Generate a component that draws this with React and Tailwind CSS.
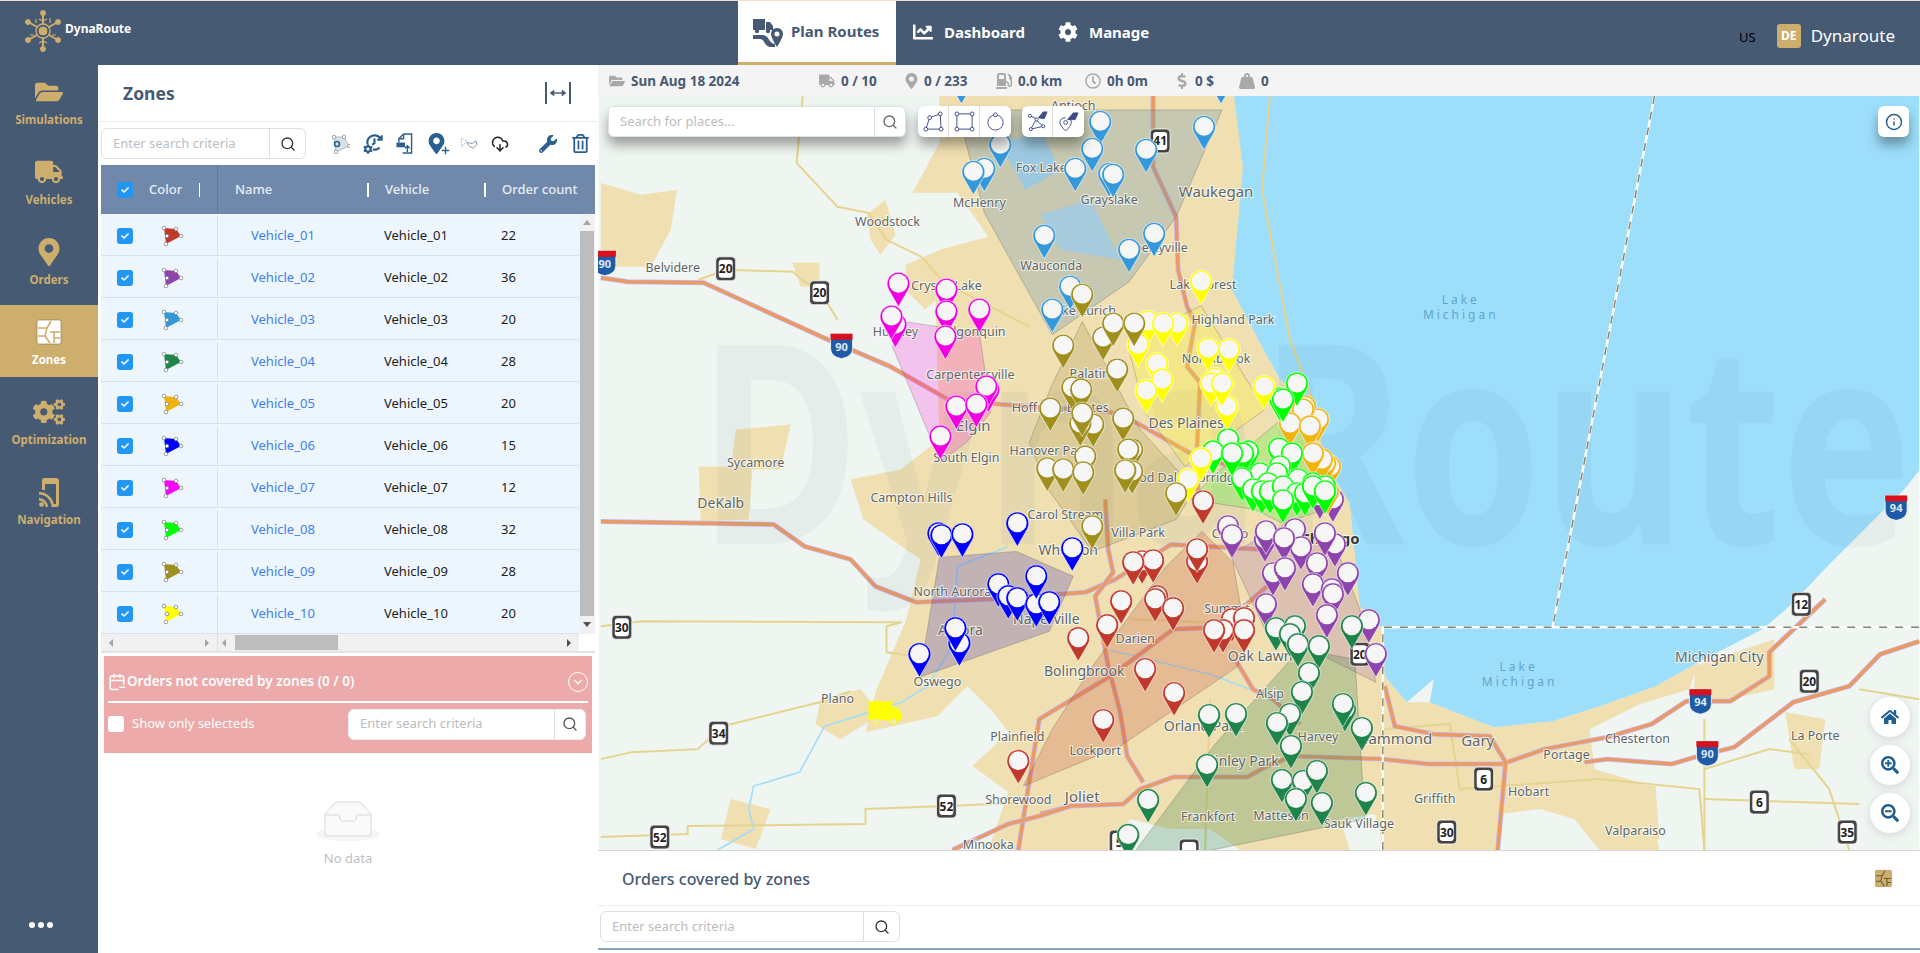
import React from "react";
import {
  FaFolderOpen, FaTruck, FaMapMarkerAlt, FaCogs, FaCog, FaChartLine, FaGasPump, FaRegClock,
  FaDollarSign, FaWeightHanging, FaWrench, FaRegTrashAlt, FaHome, FaSearchPlus, FaSearchMinus, FaHistory, FaCheck,
} from "react-icons/fa";
import { Search, CloudDownload, Info, ChevronDown, Plus, CalendarMinus } from "lucide-react";

const rows = [
  ["Vehicle_01", 22, "#c0392b"], ["Vehicle_02", 36, "#8e44ad"], ["Vehicle_03", 20, "#3498db"],
  ["Vehicle_04", 28, "#1e8449"], ["Vehicle_05", 20, "#f1b40f"], ["Vehicle_06", 15, "#0000ff"],
  ["Vehicle_07", 12, "#ff00ff"], ["Vehicle_08", 32, "#00ff00"], ["Vehicle_09", 28, "#a08f1c"],
  ["Vehicle_10", 20, "#ffff00"],
];

// pin tips in page pixels, painted in this order
const pinGroups = [
  ["#3498db", [[961,104],[1221,104],[1000,168],[984,192],[973,195],[1100,145],[1092,172],[1075,192],[1146,173],[1204,150],[1109,197],[1113,198],[1044,259],[1154,257],[1129,273],[1070,310],[1052,333]]],
  ["#f000e0", [[898,307],[946,313],[979,333],[895,348],[891,340],[946,335],[945,360],[988,413],[986,410],[956,430],[976,428],[940,460]]],
  ["#0000ff", [[938,557],[941,559],[962,558],[1017,547],[1072,572],[998,608],[1008,620],[1017,622],[1036,628],[1036,600],[1049,626],[959,667],[955,652],[919,678]]],
  ["#8e44ad", [[1333,523],[1320,520],[1228,550],[1232,559],[1265,563],[1266,555],[1295,553],[1335,568],[1325,557],[1301,571],[1284,562],[1273,597],[1285,592],[1317,587],[1348,597],[1313,608],[1332,613],[1333,618],[1327,639],[1266,628],[1369,644],[1376,678]]],
  ["#c0392b", [[1203,525],[1142,585],[1153,584],[1133,586],[1197,585],[1197,573],[1121,625],[1157,620],[1155,623],[1173,632],[1107,649],[1078,662],[1145,693],[1174,717],[1232,643],[1244,642],[1223,654],[1214,654],[1244,654],[1103,744],[1018,785]]],
  ["#f1b40f", [[1330,490],[1325,487],[1322,483],[1318,443],[1305,430],[1303,433],[1290,447],[1310,450],[1313,477],[1328,515]]],
  ["#00ff00", [[1297,407],[1280,422],[1283,423],[1228,463],[1213,475],[1248,475],[1243,477],[1279,472],[1292,477],[1280,490],[1260,497],[1277,497],[1242,502],[1268,507],[1253,513],[1262,515],[1270,515],[1298,503],[1313,507],[1325,510],[1283,510],[1297,517],[1305,517],[1313,510],[1325,515],[1283,524],[1232,477]]],
  ["#ffff00", [[1201,305],[1148,345],[1177,347],[1163,347],[1138,368],[1157,387],[1162,403],[1146,414],[1208,372],[1229,373],[1215,402],[1211,407],[1227,430],[1222,407],[1264,410],[1188,503],[1201,482]]],
  ["#a08f1c", [[1082,318],[1063,369],[1103,361],[1113,347],[1134,347],[1117,393],[1072,411],[1081,413],[1050,432],[1093,448],[1080,447],[1082,437],[1123,442],[1132,473],[1128,473],[1085,480],[1047,492],[1063,493],[1083,496],[1132,495],[1125,494],[1176,517],[1092,550]]],
  ["#1e8449", [[1276,652],[1295,650],[1290,658],[1298,668],[1319,670],[1309,697],[1352,650],[1302,716],[1345,733],[1343,728],[1209,739],[1236,738],[1290,738],[1277,747],[1291,770],[1362,752],[1207,789],[1282,804],[1303,805],[1317,795],[1296,823],[1322,827],[1366,817],[1148,824],[1128,859]]],
];

const zones = [
  ["#5f8db5", "966,110 1222,110 1176,217 1129,282 1052,335 984,213 964,137", 0.28],
  ["#ff00e0", "904,322 979,333 984,367 990,413 966,443 940,462 892,347", 0.2],
  ["#8a7a20", "1082,322 1140,430 1195,490 1176,520 1092,552 1046,487 1029,443 1051,387", 0.18],
  ["#ffff00", "1201,306 1265,410 1185,467 1145,413 1127,343", 0.22],
  ["#00ff00", "1297,407 1325,510 1283,524 1255,510 1190,500 1215,475", 0.2],
  ["#4a3cc0", "939,558 1016,552 1073,577 1049,632 919,678", 0.28],
  ["#c0392b", "1202,532 1233,563 1245,633 1238,667 1120,747 1023,787 1052,730 1090,670 1166,567", 0.22],
  ["#8e44ad", "1230,555 1285,525 1335,545 1360,610 1376,683 1320,655 1265,630", 0.2],
  ["#2f7f4a", "1300,650 1355,660 1365,820 1207,852 1135,852 1215,745", 0.25],
];

const highways = [
  "600,278 627,282 703,283 823,338 890,367 948,400 1002,405 1109,412 1136,423 1189,453 1240,470",
  "600,522 773,525 804,547 850,560 875,587 916,603 988,600 1085,593 1115,580 1171,545 1263,550",
  "1153,96 1153,167 1176,217 1178,270 1187,307 1195,323 1187,367 1200,383 1197,447 1198,500",
  "1105,500 1108,550 1113,573 1095,597 1108,667 1120,713 1127,757 1143,783",
  "1040,815 1070,807 1123,805 1140,790 1173,778 1247,778 1267,767 1293,757 1383,760 1430,765 1502,765 1545,750 1608,738 1652,725 1687,702 1731,702 1770,677 1770,653 1826,600",
  "1585,763 1608,760 1672,765 1699,757 1735,748 1794,703 1850,687 1881,655 1920,642",
  "1385,687 1395,727 1434,735 1490,737 1506,763 1498,851",
  "1018,851 1039,720 1110,677 1173,630 1220,628 1267,587",
  "952,851 1008,825 1039,817 1070,807",
  "1237,663 1253,690 1273,700 1300,725",
];

const minorRoads = [
  "698,280 725,270 792,272 823,297 837,320",
  "802,96 796,163 837,207 868,213 886,240 921,257 944,283 1029,327",
  "600,627 641,622 901,623 886,627 886,653 916,657",
  "600,760 631,753 697,750 722,727 819,703 850,692",
  "600,838 687,835 687,827 865,825 865,810 947,807 1040,803",
  "1210,700 1205,851",
  "1130,620 1250,625",
  "1380,730 1450,725 1460,790 1600,780 1700,790 1705,851",
  "1705,851 1705,720",
  "1705,800 1860,805",
  "1790,740 1830,790 1850,851",
  "1705,770 1770,750 1810,755",
  "1860,690 1920,700",
  "1270,96 1262,190 1290,340 1320,420",
];

const labels = [
  ["Antioch",1073,106],["Fox Lake",1041,168],["McHenry",979,203],["Grayslake",1109,200],["Waukegan",1216,193,15],["Woodstock",887,222],["Wauconda",1051,266],
  ["Libertyville",1156,248],["Lake Forest",1203,285],["Highland Park",1233,320],["Crystal Lake",946,286],["Lake Zurich",1082,311],["Belvidere",672,268],["Huntley",895,332],
  ["Algonquin",975,332],["Carpentersville",970,375],["Palatine",1093,374],["Northbrook",1216,359],["Hoffman Estates",1060,408],["Elgin",973,427,15],["Des Plaines",1186,424,14],
  ["Hanover Park",1049,451],["South Elgin",966,458],["Sycamore",755,463],["Wood Dale",1152,479],["Norridge",1215,479],["Campton Hills",911,499],["DeKalb",720,505,14],
  ["Carol Stream",1065,516],["Villa Park",1138,534],["Wheaton",1068,552,14],["Cicero",1230,535],["North Aurora",952,593],["Aurora",960,632,14],["Naperville",1046,621,14],
  ["Oswego",937,683],["Plano",837,700],["Darien",1135,640],["Summit",1227,610],["Bolingbrook",1084,673,14],["Oak Lawn",1260,658,14],["Alsip",1270,695],["Orland Park",1203,728,14],
  ["Harvey",1318,738],["Hammond",1395,741,15],["Tinley Park",1243,763,14],["Plainfield",1017,738],["Lockport",1095,752],["Shorewood",1018,801],["Joliet",1082,799,15],
  ["Frankfort",1208,818],["Matteson",1281,817],["Sauk Village",1359,825],["Minooka",988,846],["Gary",1478,743,15],["Griffith",1435,800],["Portage",1567,756],["Chesterton",1638,740],
  ["Hobart",1529,793],["Michigan City",1720,659,14],["La Porte",1816,737],["Valparaiso",1636,832],
];

const usShields = [
  ["20",725,269],["20",819,293],["41",1160,141],["30",621,628],["34",718,734],["52",946,807],["52",659,838],["6",1484,780],["30",1447,833],
  ["6",1760,803],["20",1810,682],["12",1802,605],["35",1848,833],["20",1360,655],["",1189,852],["5",1119,843],
];
const iShields = [["90",604,263],["90",841,346],["94",1701,702],["90",1708,754],["94",1897,508]];

const urban = [
  "939,96 1240,96 1262,190 1260,343 1280,380 1307,400 1350,503 1387,615 1385,677 1407,703 1430,703 1494,728 1553,722 1600,707 1656,687 1699,663 1690,690 1640,705 1590,730 1595,770 1645,785 1660,851 988,851 1008,793 972,767 1008,733 993,713 967,687 937,717 865,733 875,693 906,620 920,560 863,520 850,480 900,470 939,440 935,300 939,250 988,237 957,193 912,193 939,143",
  "600,183 640,195 676,190 670,230 650,267 600,267",
  "698,467 752,467 748,520 700,522",
  "792,263 819,263 819,287 800,287",
  "820,700 860,690 880,715 840,740 815,725",
  "1786,713 1826,720 1820,770 1795,770",
  "1695,667 1775,640 1775,690 1730,700 1695,700",
  "1600,783 1656,787 1660,840 1610,840",
  "866,215 885,200 895,235 880,255 870,240",
  "905,265 940,250 935,300 925,310 905,290",
  "735,430 790,425 780,470 730,470",
  "730,800 770,810 755,850 720,840",
];
const pale = [
  "1110,851 1130,820 1170,830 1210,830 1240,851",
  "1498,851 1500,815 1540,810 1575,820 1600,851",
  "1350,851 1340,820 1375,815 1385,851",
];

function Pin({ x, y, color }) {
  return (
    <g transform={`translate(${x} ${y})`}>
      <path d="M0 0 L-10.2 -17.7 A11.5 11.5 0 1 1 10.2 -17.7 Z" fill={color} stroke="#ffffff" strokeOpacity="0.75" strokeWidth="0.8" />
      <circle cx="0" cy="-23.5" r="9.4" fill="#f6f6f6" />
    </g>
  );
}

function UsShield({ n, x, y }) {
  return (
    <g transform={`translate(${x} ${y})`}>
      <rect x="-10" y="-12" width="20" height="24" rx="4" fill="#444" stroke="#fff" strokeWidth="0.8" />
      <rect x="-7" y="-9" width="14" height="18" rx="3" fill="#fff" />
      <text y="4.5" textAnchor="middle" fontSize="12" fontWeight="700" fill="#222">{n}</text>
    </g>
  );
}

function InterShield({ n, x, y }) {
  return (
    <g transform={`translate(${x} ${y})`}>
      <path d="M-11 -12 H11 V3 Q11 11 0 13 Q-11 11 -11 3 Z" fill="#1f5aa6" stroke="#fff" strokeWidth="0.8" />
      <path d="M-11 -12 H11 V-6 H-11 Z" fill="#d9111c" />
      <text y="5" textAnchor="middle" fontSize="11" fontWeight="700" fill="#dfe9f5">{n}</text>
    </g>
  );
}

function MapCanvas() {
  return (
    <svg viewBox="598 96 1322 755" className="block w-full h-full font-['Noto_Sans',sans-serif]">
      <rect x="598" y="96" width="1322" height="755" fill="#eff5f1" />
      {urban.map((p) => <polygon key={p} points={p} fill="#f0dfb1" />)}
      {pale.map((p) => <polygon key={p} points={p} fill="#eff5f1" />)}
      <polygon points="1234,96 1920,96 1920,471 1905,490 1885,510 1830,565 1790,607 1763,630 1699,663 1656,687 1600,707 1553,722 1494,728 1430,703 1434,680 1407,703 1385,677 1383,630 1360,607 1350,503 1333,477 1307,400 1280,380 1260,343 1232,290 1243,167" fill="#9ddefb" />
      <polyline points="717,851 753,830 748,810 753,787 799,773 824,727 901,703 927,687 952,647 957,567 1008,547" fill="none" stroke="#a3dcf7" strokeWidth="1.6" />
      <polyline points="1110,651 1210,675 1250,690" fill="none" stroke="#a3dcf7" strokeWidth="1.6" />
      <polygon points="1000,145 1040,130 1060,170 1025,190" fill="#b5e0f2" />
      <polygon points="1040,215 1090,200 1120,260 1060,250" fill="#c3e3ee" />
      {minorRoads.map((p) => <polyline key={p} points={p} fill="none" stroke="#e4d48e" strokeWidth="2" />)}
      {highways.map((p) => (
        <g key={p}>
          <polyline points={p} fill="none" stroke="#c5b8f5" strokeWidth="5" strokeLinejoin="round" />
          <polyline points={p} fill="none" stroke="#ea9a62" strokeWidth="3.5" strokeLinejoin="round" />
        </g>
      ))}
      <text x="698" y="545" textLength="1215" lengthAdjust="spacingAndGlyphs" fontSize="280" fontWeight="700" fill="#3f6478" fillOpacity="0.05">DynaRoute</text>
      <g fill="none" strokeWidth="2.5">
        <path d="M1655 96 L1553 628 M1383 851 V628 H1920" stroke="#fff" />
        <path d="M1655 96 L1553 628 M1383 851 V628 H1920" stroke="#85806a" strokeWidth="1.4" strokeDasharray="8 8" />
      </g>
      {zones.map(([c, p, o]) => <polygon key={p} points={p} fill={c} fillOpacity={o} stroke="#555" strokeOpacity="0.5" strokeWidth="0.6" />)}
      {labels.map(([t, x, y, s]) => (
        <text key={t} x={x} y={y + 4} textAnchor="middle" fontSize={s || 12.5} fill="#5d6666" stroke="#fff" strokeOpacity="0.7" strokeWidth="2" paintOrder="stroke">{t}</text>
      ))}
      <text x="1330" y="545" textAnchor="middle" fontSize="15" fontWeight="700" fill="#33393d" stroke="#fff" strokeOpacity="0.7" strokeWidth="2" paintOrder="stroke">Chicago</text>
      {[["Lake",1461,304],["Michigan",1461,319],["Lake",1519,672],["Michigan",1520,687]].map(([t, x, y]) => (
        <text key={`${x}${t}`} x={x} y={y} textAnchor="middle" fontSize="12" letterSpacing="3" fill="#5fa6c9">{t}</text>
      ))}
      {usShields.map(([n, x, y]) => <UsShield key={`${x}-${y}`} n={n} x={x} y={y} />)}
      {iShields.map(([n, x, y]) => <InterShield key={`${x}-${y}`} n={n} x={x} y={y} />)}
      {pinGroups.map(([c, pts]) => pts.map(([x, y]) => <Pin key={`${c}${x}-${y}`} x={x} y={y} color={c} />))}
      <g fill="#ffff00">
        <rect x="868" y="702" width="24" height="19" />
        <path d="M892 708 H897 L901 715 V721 H892 Z" />
        <circle cx="876" cy="722" r="3" stroke="#ffff00" fill="#e9e9c8" />
        <circle cx="893" cy="722" r="3" stroke="#ffff00" fill="#e9e9c8" />
      </g>
    </svg>
  );
}

function Logo() {
  return (
    <svg viewBox="0 0 36 42" className="w-9 h-[42px]" fill="#cdae6d" stroke="#cdae6d">
      <g fill="none" strokeWidth="2">
        <circle cx="18" cy="21" r="7" strokeWidth="1.4" />
        <path d="M18 14 V5 M18 28 V37 M12 17 L5 13 M24 17 L31 13 M12 25 L5 29 M24 25 L31 29" />
        <path d="M14 9 L18 11 L22 9 M25 13 V8 M11 13 V9 M14 33 L18 31 L22 33 M27 25 H31 M5 25 H9" strokeWidth="1.2" />
      </g>
      <circle cx="18" cy="21" r="4" />
      <circle cx="18" cy="3" r="2.5" /><circle cx="18" cy="39" r="2.5" />
      <circle cx="3" cy="12" r="2.5" /><circle cx="33" cy="12" r="2.5" />
      <circle cx="3" cy="30" r="2.5" /><circle cx="33" cy="30" r="2.5" />
    </svg>
  );
}

function ZonesIcon({ bg = "#ffffff", line = "#cdae6d", className = "w-7 h-7" }) {
  return (
    <svg viewBox="0 0 28 28" className={className}>
      <rect x="2" y="2" width="24" height="24" rx="2" fill={bg} stroke="#8a7448" strokeWidth="0.6" />
      <path d="M3 10 H12 L16 3 M12 10 L10 18 H3 M10 18 L15 25 M15 14 H25 M19 14 V25 M19 20 H25" fill="none" stroke={line} strokeWidth="1.6" />
    </svg>
  );
}

function NavIcon() {
  return (
    <svg viewBox="0 0 20 29" className="w-5 h-[29px]" fill="#cdae6d">
      <path d="M5 0 H17 Q20 0 20 3 V26 Q20 29 17 29 H13 V26 H17 V6 H6 V12 H3 V2 Q3 0 5 0 Z" />
      <circle cx="2.5" cy="26.5" r="2.4" />
      <path d="M0 20 A9 9 0 0 1 9 29 H6.5 A6.5 6.5 0 0 0 0 22.5 Z" />
      <path d="M0 14 A15 15 0 0 1 15 29 H12.5 A12.5 12.5 0 0 0 0 16.5 Z" />
    </svg>
  );
}

function RouteIcon() {
  return (
    <svg viewBox="0 0 32 32" className="w-8 h-8" fill="#475a74">
      <path d="M1 3 H13 V14 H1 Z M14 6 H18 L21 10 V14 H14 Z" />
      <circle cx="5" cy="15" r="2.2" /><circle cx="16" cy="15" r="2.2" />
      <path d="M1 19 H11 C17 19 17 28 23 28 V31 H19 C12 31 13 23 8 23 H1 Z" />
      <path d="M25 12 C21 12 19 15 19 18 C19 22 25 31 25 31 C25 31 31 22 31 18 C31 15 29 12 25 12 Z M25 15.5 A2.5 2.5 0 1 1 25 20.5 A2.5 2.5 0 1 1 25 15.5 Z" fillRule="evenodd" />
    </svg>
  );
}

function ColorGlyph({ color }) {
  return (
    <svg viewBox="0 0 24 22" className="w-6 h-[22px]">
      <polygon points="4,3 16,4 21,11 6,19" fill={color} />
      <g fill="#fff" stroke="#777" strokeWidth="0.7">
        <circle cx="4" cy="3" r="1.8" /><circle cx="16" cy="4" r="1.8" /><circle cx="21" cy="11" r="1.8" />
        <circle cx="6" cy="19" r="1.8" /><circle cx="7" cy="11" r="1.8" />
      </g>
    </svg>
  );
}

function Check() {
  return (
    <span className="flex items-center justify-center w-4 h-4 rounded-[3px] bg-[#2196f3]">
      <FaCheck className="text-white w-2 h-2" />
    </span>
  );
}

function SearchBox({ className, placeholder = "Enter search criteria", iconWidth = "w-[36px]", iconClass = "text-[#333]" }) {
  return (
    <div className={`flex h-[31px] bg-white border border-[#dcdfe3] rounded-md overflow-hidden ${className}`}>
      <input readOnly placeholder={placeholder} className="flex-1 min-w-0 pl-[11px] text-[13px] outline-none placeholder:text-[#bdbdbd]" />
      <div className={`flex items-center justify-center border-l border-[#dcdfe3] ${iconWidth}`}>
        <Search size={16} className={iconClass} />
      </div>
    </div>
  );
}

function SideItem({ icon, label, active }) {
  return (
    <div className={`flex flex-col items-center h-[72px] mb-2 pt-[14px] ${active ? "bg-[#cdae6d]" : ""}`}>
      <div className="flex items-center justify-center h-[26px]">{icon}</div>
      <span className={`mt-[7px] text-[11.5px] leading-4 font-bold ${active ? "text-white" : "text-[#cdae6d]"}`}>{label}</span>
    </div>
  );
}

function Stat({ icon, text, width }) {
  return (
    <div className={`flex items-center gap-[6px] ${width}`}>
      <span className="flex justify-center text-[#a9a9a9]">{icon}</span>
      <span className="pt-px text-[13.5px] font-bold text-[#475a74]">{text}</span>
    </div>
  );
}

function ToolIcon({ children }) {
  return <div className="relative flex items-center justify-center w-8 h-8 text-[#2a5f8f]">{children}</div>;
}

const DrawBtn = ({ children, last }) => (
  <div className={`flex items-center justify-center w-[31px] h-full text-[#3f4a8a] ${last ? "" : "border-r border-[#ddd]"}`}>{children}</div>
);

export default function App() {
  return (
    <div className="w-[1920px] h-[953px] overflow-hidden bg-white flex flex-col border-t border-[#f6dcd3] font-['Noto_Sans',sans-serif]">
      {/* Header */}
      <div className="flex h-16 bg-[#475a74] shrink-0">
        <div className="w-[738px] flex items-start pl-[25px] pt-[9px]">
          <Logo />
          <span className="ml-[4px] mt-[11px] text-xs font-bold text-white">DynaRoute</span>
        </div>
        <div className="w-[158px] h-16 bg-white border-b-[3px] border-[#cdae6d] flex items-center pl-[14px] gap-[7px]">
          <RouteIcon />
          <span className="text-[15px] font-bold text-[#475a74]">Plan Routes</span>
        </div>
        <div className="flex items-center ml-[17px] pb-[2px] gap-[11px] text-white">
          <FaChartLine className="w-5 h-5" />
          <span className="text-[15px] font-bold">Dashboard</span>
        </div>
        <div className="flex items-center ml-[33px] pb-[2px] gap-[11px] text-white">
          <FaCog className="w-5 h-5" />
          <span className="text-[15px] font-bold">Manage</span>
        </div>
        <div className="ml-auto flex items-center pr-[25px] pt-[6px]">
          <span className="text-[13px] text-black mt-1">US</span>
          <span className="ml-[21px] flex items-center justify-center w-6 h-6 rounded-[3px] bg-[#cdae6d] text-white text-xs font-bold">DE</span>
          <span className="ml-[10px] text-[17px] text-white">Dynaroute</span>
        </div>
      </div>

      <div className="flex flex-1 min-h-0">
        {/* Sidebar */}
        <div className="relative w-[98px] shrink-0 bg-[#475a74]">
          <SideItem icon={<FaFolderOpen className="w-7 h-7 text-[#cdae6d]" />} label="Simulations" />
          <SideItem icon={<FaTruck className="w-7 h-7 text-[#cdae6d]" />} label="Vehicles" />
          <SideItem icon={<FaMapMarkerAlt className="w-7 h-7 text-[#cdae6d]" />} label="Orders" />
          <SideItem icon={<ZonesIcon />} label="Zones" active />
          <SideItem icon={<FaCogs className="w-8 h-8 text-[#cdae6d]" />} label="Optimization" />
          <SideItem icon={<NavIcon />} label="Navigation" />
          <div className="absolute left-[29px] top-[857px] flex gap-[3px]">
            <span className="w-[6px] h-[6px] rounded-full bg-white" />
            <span className="w-[6px] h-[6px] rounded-full bg-white" />
            <span className="w-[6px] h-[6px] rounded-full bg-white" />
          </div>
        </div>

        {/* Zones panel */}
        <div className="w-[500px] shrink-0 bg-white flex flex-col">
          <div className="flex items-center justify-between h-[57px] pl-[25px] pr-[27px] border-b border-[#eeeeee]">
            <span className="pt-px text-[17.5px] font-bold text-[#475a74]">Zones</span>
            <svg viewBox="0 0 26 22" className="w-[26px] h-[22px]" fill="none" stroke="#475a74" strokeWidth="2">
              <path d="M1 0 V22 M25 0 V22" />
              <path d="M6 11 H20" strokeWidth="1.4" />
              <path d="M9 8 L5 11 L9 14 Z M17 8 L21 11 L17 14 Z" fill="#475a74" strokeWidth="0.5" />
            </svg>
          </div>
          <div className="flex items-center h-[43px] pl-[3px]">
            <SearchBox className="w-[205px]" />
            <div className="flex ml-[18px]">
              <ToolIcon>
                <svg viewBox="0 0 20 20" className="w-5 h-5">
                  <polygon points="4,3 14,3 19,12 6,18" fill="#dbe2e7" stroke="#b4bec6" />
                  <circle cx="4" cy="3" r="1.8" fill="#fff" stroke="#9aa5ad" /><circle cx="14" cy="3" r="1.8" fill="#fff" stroke="#9aa5ad" />
                  <circle cx="19" cy="12" r="1.6" fill="#fff" stroke="#9aa5ad" /><circle cx="6" cy="18" r="1.8" fill="#fff" stroke="#9aa5ad" />
                  <circle cx="7" cy="10" r="2.5" fill="none" stroke="#2a5f8f" strokeWidth="1.6" />
                </svg>
              </ToolIcon>
              <ToolIcon>
                <FaHistory className="w-[17px] h-[17px] -scale-x-100 translate-x-[2px] -translate-y-[1px]" />
                <FaCog className="absolute left-[7px] top-[16px] w-[10px] h-[10px] bg-white rounded-full" />
              </ToolIcon>
              <ToolIcon>
                <svg viewBox="0 0 18 22" className="w-[17px] h-[21px]" fill="none" stroke="#2a5f8f" strokeWidth="1.5">
                  <path d="M8 1 H16.5 V21 H7 M8 1 L3 6 V10 M8 1 V6 H3" />
                  <rect x="0.5" y="10" width="9" height="5" fill="#2a5f8f" stroke="none" />
                  <path d="M12 20 V14 M9.5 16 L12 13.5 L14.5 16" />
                </svg>
              </ToolIcon>
              <ToolIcon>
                <FaMapMarkerAlt className="w-[17px] h-[21px]" />
                <Plus size={11} strokeWidth={3} className="absolute left-[20px] top-[17px]" />
              </ToolIcon>
              <ToolIcon>
                <svg viewBox="0 0 20 16" className="w-[19px] h-[15px]" fill="none" stroke="#a9b8c4" strokeWidth="1">
                  <path d="M2 2 L8 5 L3 12 Z" strokeDasharray="1.5 1" />
                  <path d="M8 7 L14 8 L18 5 L19 9 L15 13 L11 11 Z" stroke="#7f96a8" />
                </svg>
              </ToolIcon>
              <ToolIcon><CloudDownload size={18} className="text-[#222]" /></ToolIcon>
              <div className="w-4" />
              <ToolIcon><FaWrench className="w-[18px] h-[18px]" /></ToolIcon>
              <ToolIcon><FaRegTrashAlt className="w-[17px] h-[19px]" /></ToolIcon>
            </div>
          </div>

          {/* Table */}
          <div className="ml-[3px] w-[494px] border-b-2 border-[#e3e3e3]">
            <div className="flex h-[49px] bg-[#7089ab] text-[13px] font-medium text-[#e7edf5]">
              <div className="flex items-center w-[117px] border-r border-[#62789a] pl-4 shrink-0">
                <Check />
                <span className="ml-4">Color</span>
                <span className="ml-[17px] h-[14px] w-px bg-white" />
              </div>
              <div className="flex items-center w-[149px] pl-[17px]">Name</div>
              <div className="flex items-center w-[117px]"><span className="h-[14px] w-[2px] bg-white mr-4" />Vehicle</div>
              <div className="flex items-center"><span className="h-[14px] w-[2px] bg-white mr-4" />Order count</div>
            </div>
            <div className="flex">
              <div className="w-[478px]">
                {rows.map(([name, count, color]) => (
                  <div key={name} className="flex h-[42px] pt-[2px] bg-[#eef6fd] border-b border-[#d9e1e8] text-[13px]">
                    <div className="flex items-center w-[117px] shrink-0 border-r border-[#d9e1e8] pl-4">
                      <Check />
                      <span className="ml-[27px]"><ColorGlyph color={color} /></span>
                    </div>
                    <div className="flex items-center w-[166px] pl-[33px] text-[#3f7ef0]">{name}</div>
                    <div className="flex items-center w-[117px] text-[#1d1d1d]">{name}</div>
                    <div className="flex items-center text-[#1d1d1d]">{count}</div>
                  </div>
                ))}
              </div>
              <div className="flex flex-col items-center w-4 bg-[#f1f1f1]">
                <span className="mt-[6px] h-0 w-0 border-x-[4px] border-b-[5px] border-x-transparent border-b-[#a3a3a3]" />
                <span className="mt-[6px] h-[385px] w-[14px] bg-[#bdbdbd]" />
                <span className="mt-[6px] h-0 w-0 border-x-[4px] border-t-[5px] border-x-transparent border-t-[#505050]" />
              </div>
            </div>
            <div className="flex h-[17px] bg-[#f1f1f1]">
              <div className="flex items-center justify-between w-[117px] px-2 border-r border-[#dddddd]">
                <span className="h-0 w-0 border-y-[4px] border-r-[4px] border-y-transparent border-r-[#a3a3a3]" />
                <span className="h-0 w-0 border-y-[4px] border-l-[4px] border-y-transparent border-l-[#a3a3a3]" />
              </div>
              <div className="flex items-center w-[361px] pl-1 pr-2">
                <span className="h-0 w-0 border-y-[4px] border-r-[4px] border-y-transparent border-r-[#a3a3a3]" />
                <span className="ml-[9px] h-[15px] w-[103px] bg-[#bdbdbd]" />
                <span className="ml-auto h-0 w-0 border-y-[4px] border-l-[4px] border-y-transparent border-l-[#505050]" />
              </div>
              <div className="w-4 bg-white" />
            </div>
          </div>

          {/* Not covered */}
          <div className="mt-[3px] ml-[6px] w-[488px] h-[97px] bg-[#ecaaaa] text-white px-1">
            <div className="flex items-center h-[47px] border-b-2 border-white pt-[6px]">
              <CalendarMinus size={18} />
              <span className="ml-[1px] text-[13.5px] font-semibold">Orders not covered by zones (0 / 0)</span>
              <span className="ml-auto flex items-center justify-center w-5 h-5 rounded-full border border-white"><ChevronDown size={14} /></span>
            </div>
            <div className="flex items-center h-[42px]">
              <span className="w-4 h-4 rounded-[3px] bg-white" />
              <span className="ml-2 text-[13px]">Show only selecteds</span>
              <SearchBox className="ml-auto w-[238px] mr-[2px] border-[#eeeeee]" iconWidth="w-[31px]" iconClass="text-[#555]" />
            </div>
          </div>

          {/* Empty state */}
          <div className="flex flex-col items-center mt-12">
            <svg viewBox="0 0 64 41" className="w-[64px] h-[41px]">
              <ellipse cx="32" cy="33" rx="32" ry="7" fill="#f5f5f5" />
              <path d="M9 13 L20 1 H44 L55 13 V32 Q55 35 52 35 H12 Q9 35 9 32 Z" fill="#fafafa" stroke="#d9d9d9" />
              <path d="M9 14 H23 C24 20 25 20 27 20 H37 C39 20 40 20 41 14 H55" fill="none" stroke="#d9d9d9" />
            </svg>
            <span className="mt-[7px] text-[13px] text-[#bfbfbf]">No data</span>
          </div>
        </div>

        {/* Map column */}
        <div className="flex-1 min-w-0 flex flex-col">
          <div className="flex items-center h-[31px] pl-[11px] bg-[#f4f4f4] shrink-0">
            <Stat width="w-[210px]" icon={<FaFolderOpen className="w-4 h-4" />} text="Sun Aug 18 2024" />
            <Stat width="w-[86px]" icon={<FaTruck className="w-4 h-4" />} text="0 / 10" />
            <Stat width="w-[91px]" icon={<FaMapMarkerAlt className="w-[13px] h-4" />} text="0 / 233" />
            <Stat width="w-[89px]" icon={<FaGasPump className="w-4 h-4" />} text="0.0 km" />
            <Stat width="w-[90px]" icon={<FaRegClock className="w-4 h-4" />} text="0h 0m" />
            <Stat width="w-[64px]" icon={<FaDollarSign className="w-[14px] h-4" />} text="0 $" />
            <Stat width="w-[40px]" icon={<FaWeightHanging className="w-4 h-4" />} text="0" />
          </div>

          <div className="relative h-[755px] shrink-0 border-b border-[#d5d5d5]">
            <MapCanvas />
            <div className="absolute left-[10px] top-[10px] w-[298px] shadow-[0_8px_12px_rgba(0,0,0,0.35)] rounded-md">
              <SearchBox className="w-full" placeholder="Search for places..." iconWidth="w-[31px]" iconClass="text-[#666]" />
            </div>
            <div className="absolute left-[320px] top-[10px] flex h-[31px] gap-[11px]">
              <div className="flex h-full bg-white rounded-md shadow-[0_8px_12px_rgba(0,0,0,0.35)]">
                <DrawBtn>
                  <svg viewBox="0 0 22 22" className="w-[21px] h-[21px]" fill="none" stroke="currentColor"><path d="M3 19 L7 7 L18 3 L19 19 Z" /><g fill="#fff"><circle cx="3" cy="19" r="2" /><circle cx="7" cy="7" r="2" /><circle cx="18" cy="3" r="2" /><circle cx="19" cy="19" r="2" /></g></svg>
                </DrawBtn>
                <DrawBtn>
                  <svg viewBox="0 0 22 22" className="w-[21px] h-[21px]" fill="none" stroke="currentColor"><path d="M3 3 H19 V19 H3 Z" /><g fill="#fff"><circle cx="3" cy="3" r="2" /><circle cx="19" cy="3" r="2" /><circle cx="3" cy="19" r="2" /><circle cx="19" cy="19" r="2" /></g></svg>
                </DrawBtn>
                <DrawBtn last>
                  <svg viewBox="0 0 22 22" className="w-[21px] h-[21px]" fill="none" stroke="currentColor"><circle cx="11" cy="12" r="8" /><circle cx="11" cy="4" r="2" fill="#fff" /></svg>
                </DrawBtn>
              </div>
              <div className="flex h-full bg-white rounded-md shadow-[0_8px_12px_rgba(0,0,0,0.35)]">
                <DrawBtn>
                  <svg viewBox="0 0 22 22" className="w-[21px] h-[21px]" fill="none" stroke="currentColor"><path d="M3 5 L10 8 L4 19 L17 16 L9 9" /><g fill="#fff"><circle cx="3" cy="5" r="1.6" /><circle cx="4" cy="19" r="1.6" /><circle cx="17" cy="16" r="1.6" /><circle cx="10" cy="9" r="1.6" /></g><path d="M12 7 L17 1 H21 L18 8 Z" fill="currentColor" /></svg>
                </DrawBtn>
                <DrawBtn last>
                  <svg viewBox="0 0 22 22" className="w-[21px] h-[21px]" fill="none" stroke="currentColor"><path d="M8 7 C4 7 2 9 2 12 C2 15 8 21 8 21 C8 21 14 15 14 12 C14 10 13 8 11 8" /><circle cx="8" cy="12" r="2" /><path d="M10 9 L16 2 H21 L18 9 Z" fill="currentColor" /></svg>
                </DrawBtn>
              </div>
            </div>
            <div className="absolute right-[11px] top-[10px] flex items-center justify-center w-[31px] h-[31px] bg-white rounded-md shadow-[0_8px_12px_rgba(0,0,0,0.35)]">
              <Info size={18} className="text-[#2a5f8f]" />
            </div>
            <div className="absolute right-[10px] top-[601px] flex flex-col gap-2">
              {[<FaHome key="h" className="w-[18px] h-[18px]" />, <FaSearchPlus key="p" className="w-[18px] h-[18px]" />, <FaSearchMinus key="m" className="w-[18px] h-[18px]" />].map((icon) => (
                <span key={icon.key} className="flex items-center justify-center w-10 h-10 rounded-full bg-white text-[#1f5f92] shadow-[0_2px_10px_rgba(0,0,0,0.12)]">{icon}</span>
              ))}
            </div>
          </div>

          <div className="flex items-center justify-between h-[55px] pl-6 pr-[27px] border-b border-[#eeeeee] shrink-0">
            <span className="pt-px text-base font-medium text-[#475a74]">Orders covered by zones</span>
            <ZonesIcon bg="#cdae6d" line="#6b5a32" className="w-[19px] h-[19px]" />
          </div>
          <div className="pt-[5px] pl-[2px]">
            <SearchBox className="w-[300px]" />
          </div>
          <div className="mt-[6px] h-[2px] bg-[#8fa3bc]" />
        </div>
      </div>
    </div>
  );
}
